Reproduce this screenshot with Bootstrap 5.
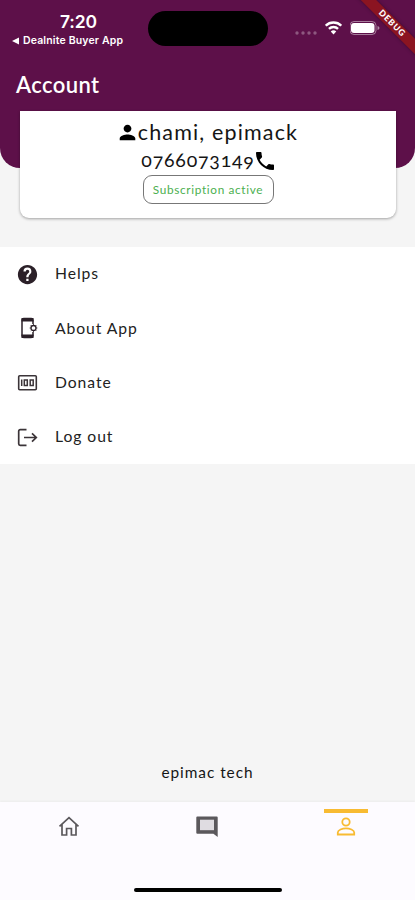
<!DOCTYPE html>
<html lang="en">
<head>
<meta charset="utf-8">
<meta name="viewport" content="width=device-width, initial-scale=1">
<title>Account</title>
<link href="https://cdn.jsdelivr.net/npm/bootstrap@5.3.0/dist/css/bootstrap.min.css" rel="stylesheet">
<style>
body{font-family:Lato,"Open Sans",sans-serif;background:#f5f5f5;color:#151515;letter-spacing:.7px}
.screen{height:900px}
svg{display:block;flex:none}
.top-area{height:168px;background:#5d1049;border-radius:0 0 20px 20px;color:#fff;flex:none}
.status-bar{height:58px}
.clock-col{width:136px;padding:11px 0 0 12px}
.clock{font:600 17.5px/20px Inter,sans-serif;letter-spacing:-.2px;padding:1px 0 0 48px;height:20px}
.back-app{font:600 10.5px/14px Inter,sans-serif;letter-spacing:.15px;margin-top:3px;gap:4px}
.island{width:120px;height:35px;margin:11px 0 0 12px;border-radius:18px;background:#000}
.signals{margin:20px 0 0 27px}
.debug-band{width:120px;height:11px;top:17.5px;left:331.5px;transform:rotate(45deg);background:#8b1421;font:900 8.5px/11px Lato,sans-serif;letter-spacing:.9px;color:#fff;box-shadow:0 0 4px rgba(0,0,0,.35)}
.page-title{font:600 22px/28px Lato,sans-serif;letter-spacing:.4px;margin:13px 0 0 16px}
.profile{height:107px;margin:-57px 19px 0 20px;border-radius:0 0 9px 9px;box-shadow:0 1px 3px rgba(0,0,0,.35);padding-top:7px;flex:none;position:relative}
.who{font-size:21.5px;line-height:28px;letter-spacing:1.15px}
.phone{font-size:19.5px;line-height:28px;letter-spacing:.8px;font-variant-numeric:oldstyle-nums;height:29px}
.phone span{position:relative;top:-1px}
.pill{width:131px;height:29px;border:1px solid #777;border-radius:9px;color:#4caf50;font-size:11.8px;line-height:27px;letter-spacing:.65px}
.menu{margin-top:29px;height:217px;flex:none}
.menu-row{height:54.3px;padding-left:17px;gap:17px;font-size:15.7px;letter-spacing:.95px;color:#222}
.credit{font-size:15.4px;letter-spacing:.95px;padding-bottom:18px}
.tabs{height:98px;background:#fdfbff;flex:none;padding-top:7px;box-shadow:0 -1px 2px rgba(0,0,0,.04)}
.tab-mark{width:44px;height:4px}
.tab-mark.on{background:#f8bb32}
.home-bar{width:148px;height:4px;border-radius:2px;background:#000;margin-bottom:8px}
</style>
<script src="https://cdn.jsdelivr.net/npm/bootstrap@5.3.0/dist/js/bootstrap.bundle.min.js"></script>
</head>
<body>
<div class="screen d-flex flex-column position-relative overflow-hidden">
  <header class="top-area">
    <div class="status-bar d-flex align-items-start">
      <div class="clock-col">
        <div class="clock">7:20</div>
        <div class="back-app d-flex align-items-center text-nowrap">
          <svg width="7" height="8" viewBox="0 0 7 8"><path d="M0 4 7 .6v6.8z" fill="#fff"/></svg><span>Dealnite Buyer App</span>
        </div>
      </div>
      <div class="island"></div>
      <div class="signals d-flex">
        <svg width="22" height="17" viewBox="0 0 22 17" fill="#fff" opacity=".3"><circle cx="2" cy="13" r="1.7"/><circle cx="8" cy="13" r="1.7"/><circle cx="14" cy="13" r="1.7"/><circle cx="20" cy="13" r="1.7"/></svg>
        <svg class="ms-2" width="17" height="15" viewBox="0 0 18 15"><g fill="none" stroke="#fff" stroke-width="2.5"><path d="M.8 5.6a11.6 11.6 0 0 1 16.400 0"/><path d="M4.200 9a6.800 6.800 0 0 1 9.600 0"/></g><path d="M9 15 6.100 11.800a4.200 4.200 0 0 1 5.800 0z" fill="#fff"/></svg>
        <svg class="ms-2" width="31" height="16" viewBox="0 0 31 16"><rect x="0" y="1.500" width="26" height="13" rx="4" fill="none" stroke="#fff" opacity=".45"/><rect x="1" y="3" width="23.500" height="10" rx="3" fill="#fff"/><path d="M27.500 6v4q2-.6 2-2t-2-2z" fill="#fff" opacity=".5"/></svg>
      </div>
    </div>
    <h1 class="page-title">Account</h1>
  </header>
  <div class="debug-band position-absolute text-center">DEBUG</div>

  <section class="profile bg-white d-flex flex-column align-items-center">
    <div class="who d-flex align-items-center">
      <svg width="20" height="21" viewBox="1 0 23 24"><path d="M12 12c2.210 0 4-1.790 4-4s-1.790-4-4-4-4 1.790-4 4 1.790 4 4 4zm0 2c-2.670 0-8 1.340-8 4v2h16v-2c0-2.660-5.330-4-8-4z" transform="translate(-1.500 -1.500) scale(1.120)"/></svg><span>chami, epimack</span>
    </div>
    <div class="phone d-flex align-items-center"><span>0766073149</span>
      <svg width="20" height="20" viewBox="2 2 20 20"><path d="M6.620 10.790c1.440 2.830 3.760 5.140 6.590 6.590l2.200-2.200c.27-.27.67-.36 1.020-.24 1.120.37 2.330.57 3.570.57.55 0 1 .45 1 1V20c0 .55-.45 1-1 1-9.390 0-17-7.610-17-17 0-.55.45-1 1-1h3.500c.55 0 1 .45 1 1 0 1.250.2 2.450.57 3.570.11.35.030.74-.25 1.020l-2.200 2.200z"/></svg>
    </div>
    <div class="pill text-center">Subscription active</div>
  </section>

  <nav class="menu bg-white">
    <div class="menu-row d-flex align-items-center">
      <svg width="21" height="21" viewBox="0 0 24 24" fill="#2b2028"><path d="M12 1C5.930 1 1 5.930 1 12s4.930 11 11 11 11-4.930 11-11S18.070 1 12 1zm1.200 18.400h-2.600v-2.600h2.600zm2.400-8.500-1.100 1.100c-.9.900-1.300 1.600-1.300 3.200h-2.600v-.6c0-1.200.5-2.300 1.300-3.200l1.500-1.500c.4-.4.600-.9.600-1.400a2 2 0 0 0-4 0H7.400a4.500 4.500 0 0 1 9 0c0 .9-.3 1.800-.8 2.400z"/></svg><span>Helps</span>
    </div>
    <div class="menu-row d-flex align-items-center">
      <svg width="21" height="22" viewBox="0 0 21 22"><path d="M16 7V3.200A1.700 1.700 0 0 0 14.300 1.500H6.700A1.700 1.700 0 0 0 5 3.200v15.600a1.700 1.700 0 0 0 1.700 1.700h7.600a1.700 1.700 0 0 0 1.700-1.700V15" fill="none" stroke="#2b2028" stroke-width="1.500"/><path d="M4.500 1h12v3.600h-12zM4.500 17.400h12v3.600h-12z" fill="#2b2028"/><circle cx="16.500" cy="11" r="2.500" fill="none" stroke="#2b2028" stroke-width="1.300"/><path d="M16.500 7.200v1M16.500 13.800v1M19.300 11h1M12.700 11h1M13.800 8.300l.7.700M18.500 13l.7.700M19.200 8.300l-.7.700M14.500 13l-.7.700" stroke="#2b2028"/></svg><span>About App</span>
    </div>
    <div class="menu-row d-flex align-items-center">
      <svg width="21" height="21" viewBox="0 0 21 21"><rect x="1.700" y="3.700" width="17.600" height="14" rx="1" fill="none" stroke="#3b3438" stroke-width="1.600"/><path d="M4.700 7.500v6.500" stroke="#3b3438" stroke-width="1.500"/><rect x="7.300" y="8" width="3" height="5.500" fill="none" stroke="#3b3438" stroke-width="1.500"/><rect x="13.200" y="8" width="3" height="5.500" fill="none" stroke="#3b3438" stroke-width="1.500"/></svg><span>Donate</span>
    </div>
    <div class="menu-row d-flex align-items-center">
      <svg width="21" height="21" viewBox="0 0 21 21" fill="none" stroke="#3b3438" stroke-width="1.700"><path d="M9.500 2.700H3.200a1.500 1.500 0 0 0-1.500 1.500v12.600a1.500 1.500 0 0 0 1.500 1.500h6.300M7 10.500h12M15 6.300l4.300 4.200-4.300 4.200"/></svg><span>Log out</span>
    </div>
  </nav>

  <div class="credit flex-grow-1 d-flex align-items-end justify-content-center"><span>epimac tech</span></div>

  <footer class="tabs d-flex flex-column justify-content-between">
    <div class="row g-0">
      <div class="col d-flex flex-column align-items-center"><div class="tab-mark"></div>
        <svg width="24" height="26" viewBox="0 0 24 26"><path d="M2.500 13.300 12 4.700l9.500 8.600M5 11.500V22h4.600v-6.500h4.800V22H19V11.500" fill="none" stroke="#5b585c" stroke-width="1.700"/></svg></div>
      <div class="col d-flex flex-column align-items-center"><div class="tab-mark"></div>
        <svg width="24" height="26" viewBox="0 0 24 26"><path d="M1.300 4.500a1 1 0 0 1 1-1h19.400a1 1 0 0 1 1 1V24l-4.300-3.200H2.300a1 1 0 0 1-1-1z" fill="#5b585c"/><path d="M5 6.700h14v10.500H5z" fill="#dfdce1"/></svg></div>
      <div class="col d-flex flex-column align-items-center"><div class="tab-mark on"></div>
        <svg width="24" height="26" viewBox="0 0 24 26" fill="none" stroke="#f8bb32" stroke-width="1.800"><circle cx="12" cy="9" r="3.700"/><path d="M3.800 21.500v-2c0-2.500 4.500-4.200 8.200-4.200s8.200 1.700 8.200 4.200v2z"/></svg></div>
    </div>
    <div class="home-bar align-self-center"></div>
  </footer>
</div>
</body>
</html>
